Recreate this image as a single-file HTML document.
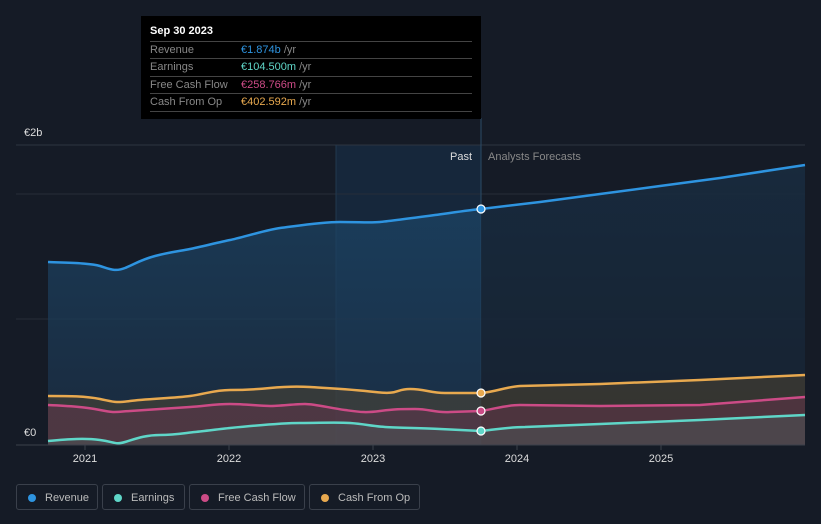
<!DOCTYPE html>
<html><head><meta charset="utf-8"><style>
body{margin:0;background:#151b26;width:821px;height:524px;overflow:hidden;font-family:"Liberation Sans",sans-serif;}
.tt{position:absolute;left:141px;top:16px;width:340px;height:103px;background:#000;}
.tt .h{position:absolute;left:9px;top:9px;color:#fff;font-size:11px;font-weight:bold;}
.row{position:absolute;left:9px;width:322px;border-top:1px solid #444;height:17px;font-size:11px;line-height:17px;color:#888;}
.row span{position:absolute;left:91px;}
.row i{font-style:normal;color:#888;}
.leg{position:absolute;top:484px;height:26px;border:1px solid #3a404b;border-radius:3px;color:#bbb;font-size:11px;line-height:26px;box-sizing:border-box;}
.leg b{position:absolute;left:11px;top:9px;width:8px;height:8px;border-radius:50%;}
.leg span{position:absolute;left:28px;}
</style></head><body>
<svg width="821" height="524" style="position:absolute;left:0;top:0">
<defs>
<linearGradient id="rg" x1="0" y1="0" x2="0" y2="1"><stop offset="0" stop-color="#1d4a6e" stop-opacity=".7"/><stop offset="1" stop-color="#1b3047" stop-opacity=".7"/></linearGradient>
</defs>
<rect x="336" y="145" width="145" height="300" fill="#17304a" opacity=".6"/>
<line x1="16" y1="145" x2="805" y2="145" stroke="#2d3440"/>
<line x1="16" y1="194" x2="805" y2="194" stroke="#262d38"/>
<line x1="16" y1="319" x2="805" y2="319" stroke="#262d38"/>
<line x1="481" y1="118" x2="481" y2="445" stroke="#2a4b66"/>
<line x1="336" y1="145" x2="336" y2="445" stroke="#21384f"/>
<path d="M48,262 C70,263 90,263 100,266 S115,272 125,268 S140,260 155,256 S180,251 190,249 S220,242 230,240 S270,229 280,228 S320,222 340,222 S370,223 380,222 S420,217 435,215 S470,210 481,209 L540,202 L600,194 L660,186 L720,178 L805,165 L805,445 L48,445Z" fill="url(#rg)"/>
<path d="M481,209 L540,202 L600,194 L660,186 L720,178 L805,165 L805,445 L481,445Z" fill="#151b26" opacity=".55"/>
<path d="M48,396 C70,396 85,396 100,399 S115,403 130,401 S175,398 190,396 S215,390 230,390 S260,389 270,388 S295,386 310,387 S350,389 375,392 S395,389 410,389 S430,393 445,393 L481,393 C495,392 505,387 520,386 L600,384 L700,380 L805,375 L805,445 L48,445Z" fill="#5a4b30" opacity=".45"/>
<path d="M48,405 C70,406 85,407 100,410 S115,412 130,411 S175,408 190,407 S215,404 230,404 S260,406 270,406 S295,404 305,404 S330,408 345,410 S365,413 380,411 S400,409 415,409 S435,413 450,412 L481,411 C495,409 505,405 520,405 L600,406 L700,405 L805,397 L805,445 L48,445Z" fill="#6b3550" opacity=".45"/>
<path d="M48,441 C70,439 85,438 100,440 S115,445 125,442 S145,435 160,435 S185,433 195,432 S220,429 230,428 S280,423 300,423 S335,422 350,423 S370,426 385,427 S420,428 440,429 L481,431 C500,429 510,427 525,427 L600,424 L700,420 L805,415 L805,445 L48,445Z" fill="#4a6060" opacity=".4"/>
<g fill="none" stroke-width="2.5">
<path d="M48,262 C70,263 90,263 100,266 S115,272 125,268 S140,260 155,256 S180,251 190,249 S220,242 230,240 S270,229 280,228 S320,222 340,222 S370,223 380,222 S420,217 435,215 S470,210 481,209 L540,202 L600,194 L660,186 L720,178 L805,165" stroke="#2e94e0"/>
<path d="M48,396 C70,396 85,396 100,399 S115,403 130,401 S175,398 190,396 S215,390 230,390 S260,389 270,388 S295,386 310,387 S350,389 375,392 S395,389 410,389 S430,393 445,393 L481,393 C495,392 505,387 520,386 L600,384 L700,380 L805,375" stroke="#e8a94f"/>
<path d="M48,405 C70,406 85,407 100,410 S115,412 130,411 S175,408 190,407 S215,404 230,404 S260,406 270,406 S295,404 305,404 S330,408 345,410 S365,413 380,411 S400,409 415,409 S435,413 450,412 L481,411 C495,409 505,405 520,405 L600,406 L700,405 L805,397" stroke="#cc4b86"/>
<path d="M48,441 C70,439 85,438 100,440 S115,445 125,442 S145,435 160,435 S185,433 195,432 S220,429 230,428 S280,423 300,423 S335,422 350,423 S370,426 385,427 S420,428 440,429 L481,431 C500,429 510,427 525,427 L600,424 L700,420 L805,415" stroke="#5fd6c8"/>
</g>
<g stroke="#fff" stroke-width="1.2">
<circle cx="481" cy="209" r="4" fill="#2e94e0"/>
<circle cx="481" cy="393" r="4" fill="#e8a94f"/>
<circle cx="481" cy="411" r="4" fill="#cc4b86"/>
<circle cx="481" cy="431" r="4" fill="#5fd6c8"/>
</g>
<line x1="16" y1="445" x2="805" y2="445" stroke="#3a404b"/>
<g stroke="#3a404b"><line x1="85" y1="445" x2="85" y2="450"/><line x1="229" y1="445" x2="229" y2="450"/><line x1="373" y1="445" x2="373" y2="450"/><line x1="517" y1="445" x2="517" y2="450"/><line x1="661" y1="445" x2="661" y2="450"/></g>
<g font-size="11" fill="#ddd" text-anchor="middle" font-family="Liberation Sans">
<text x="85" y="462">2021</text><text x="229" y="462">2022</text><text x="373" y="462">2023</text><text x="517" y="462">2024</text><text x="661" y="462">2025</text>
</g>
<text x="24" y="136" font-size="11" fill="#ddd">€2b</text>
<text x="24" y="436" font-size="11" fill="#ddd">€0</text>
<text x="472" y="160" font-size="11" fill="#ddd" text-anchor="end">Past</text>
<text x="488" y="160" font-size="11" fill="#888">Analysts Forecasts</text>
</svg>
<div class="tt"><div class="h">Sep 30 2023</div>
<div class="row" style="top:25px">Revenue<span style="color:#2e94e0">€1.874b <i>/yr</i></span></div>
<div class="row" style="top:42px">Earnings<span style="color:#5fd6c8">€104.500m <i>/yr</i></span></div>
<div class="row" style="top:60px">Free Cash Flow<span style="color:#cc4b86">€258.766m <i>/yr</i></span></div>
<div class="row" style="top:77px">Cash From Op<span style="color:#e8a94f">€402.592m <i>/yr</i></span></div>
<div class="row" style="top:95px;height:0"></div>
</div>
<div class="leg" style="left:16px;width:82px"><b style="background:#2e94e0"></b><span>Revenue</span></div>
<div class="leg" style="left:102px;width:83px"><b style="background:#5fd6c8"></b><span>Earnings</span></div>
<div class="leg" style="left:189px;width:116px"><b style="background:#cc4b86"></b><span>Free Cash Flow</span></div>
<div class="leg" style="left:309px;width:111px"><b style="background:#e8a94f"></b><span>Cash From Op</span></div>
</body></html>
